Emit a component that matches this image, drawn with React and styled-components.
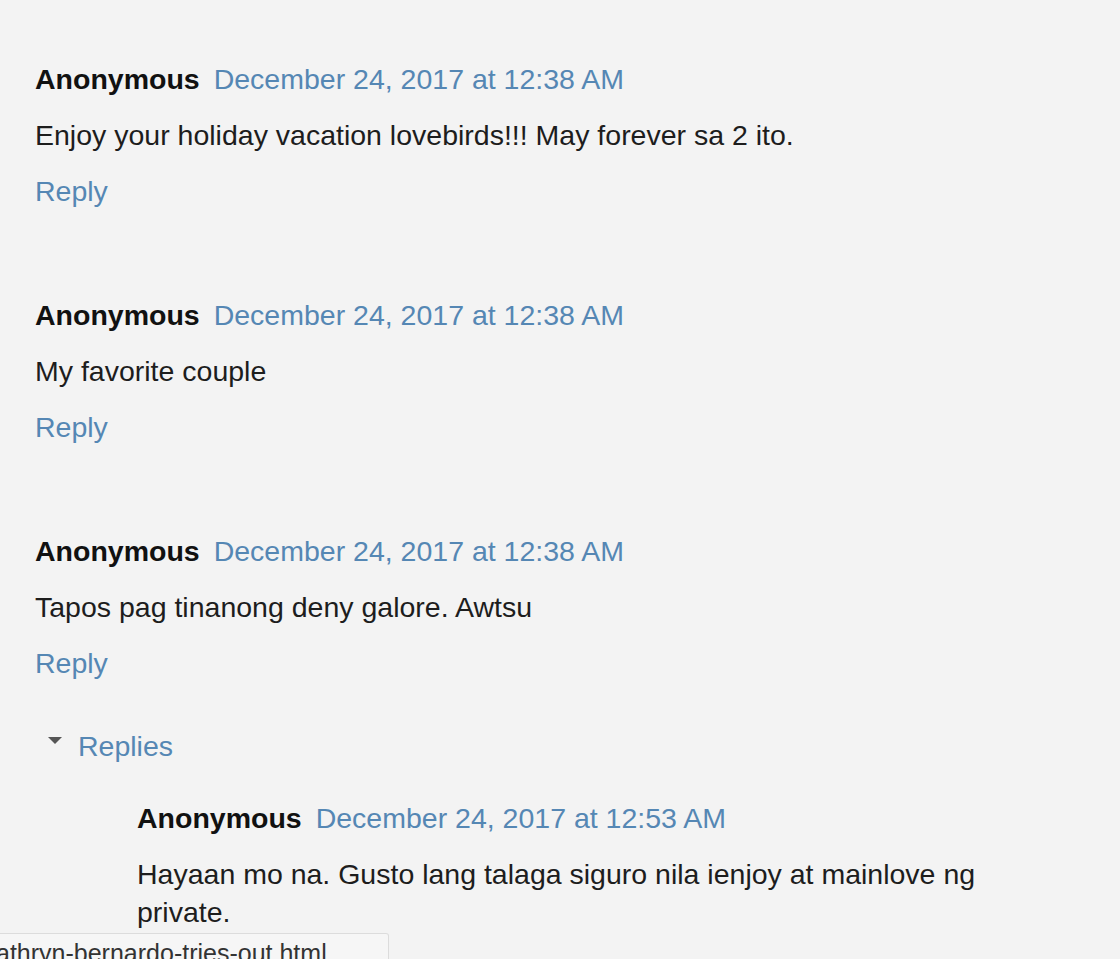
import React from 'react';
import styled, {createGlobalStyle} from 'styled-components';

const GlobalStyle = createGlobalStyle`
  html, body {
    margin: 0;
    padding: 0;
    background: #f3f3f3;
  }
  body {
    font-family: "Liberation Sans", Arial, sans-serif;
    color: #222;
  }
`;

const Page = styled.div`
  padding: 60px 0 0 35px;
  width: 985px;
  height: 899px;
  overflow: hidden;
`;

const CommentBox = styled.div`
  display: flex;
  flex-direction: column;
  gap: 18px;
  margin-bottom: ${props => props.last ? 45 : 86}px;
`;

const Header = styled.div`
  display: flex;
  align-items: baseline;
  gap: 14px;
  font-size: 28.5px;
  line-height: 38px;
`;

const Author = styled.span`
  font-weight: bold;
  color: #111;
`;

const DateLink = styled.a`
  color: #5587b4;
  text-decoration: none;
`;

const Body = styled.div`
  font-size: 28.5px;
  line-height: 38px;
  color: #1d1d1d;
`;

const ReplyLink = styled.a`
  font-size: 28.5px;
  line-height: 38px;
  color: #5587b4;
  text-decoration: none;
  align-self: flex-start;
`;

const Thread = styled.div`
  display: flex;
  flex-direction: column;
  gap: 34px;
`;

const Toggle = styled.div`
  display: flex;
  align-items: center;
  gap: 16px;
  padding-left: 13px;
  font-size: 28.5px;
  line-height: 38px;
  color: #5587b4;
`;

const Arrow = styled.svg`
  width: 14px;
  height: 7px;
  margin-top: -12px;
`;

const Nested = styled.div`
  padding-left: 102px;
`;

const StatusBar = styled.div`
  position: fixed;
  left: 0;
  bottom: -12px;
  width: 389px;
  height: 38px;
  box-sizing: border-box;
  padding-top: 4px;
  border: 1px solid #dcdcdc;
  border-left: none;
  border-radius: 0 3px 0 0;
  background: #f6f6f6;
  overflow: hidden;
  white-space: nowrap;
  font-size: 25px;
  line-height: 30px;
  color: #333;
`;

const StatusText = styled.span`
  display: inline-block;
  margin-left: -4px;
`;

const comments = [
  {date: 'December 24, 2017 at 12:38 AM', text: 'Enjoy your holiday vacation lovebirds!!! May forever sa 2 ito.'},
  {date: 'December 24, 2017 at 12:38 AM', text: 'My favorite couple'},
  {date: 'December 24, 2017 at 12:38 AM', text: 'Tapos pag tinanong deny galore. Awtsu', replies: [
    {date: 'December 24, 2017 at 12:53 AM', text: 'Hayaan mo na. Gusto lang talaga siguro nila ienjoy at mainlove ng private.'},
  ]},
];

const Comment = ({c, last, nested}) => (
  <CommentBox last={last}>
    <Header>
      <Author>Anonymous</Author>
      <DateLink href="#">{c.date}</DateLink>
    </Header>
    <Body>{c.text}</Body>
    {!nested && <ReplyLink href="#">Reply</ReplyLink>}
  </CommentBox>
);

export default function App() {
  return (
    <>
      <GlobalStyle/>
      <Page>
        {comments.map((c, i) => (
          <div key={i}>
            <Comment c={c} last={!!c.replies}/>
            {c.replies && (
              <Thread>
                <Toggle>
                  <Arrow viewBox="0 0 14 7"><path d="M0 0 H14 L7 7 Z" fill="#555"/></Arrow>
                  <span>Replies</span>
                </Toggle>
                <Nested>
                  {c.replies.map((r, j) => <Comment key={j} c={r} nested last/>)}
                </Nested>
              </Thread>
            )}
          </div>
        ))}
      </Page>
      <StatusBar><StatusText>athryn-bernardo-tries-out.html</StatusText></StatusBar>
    </>
  );
}
